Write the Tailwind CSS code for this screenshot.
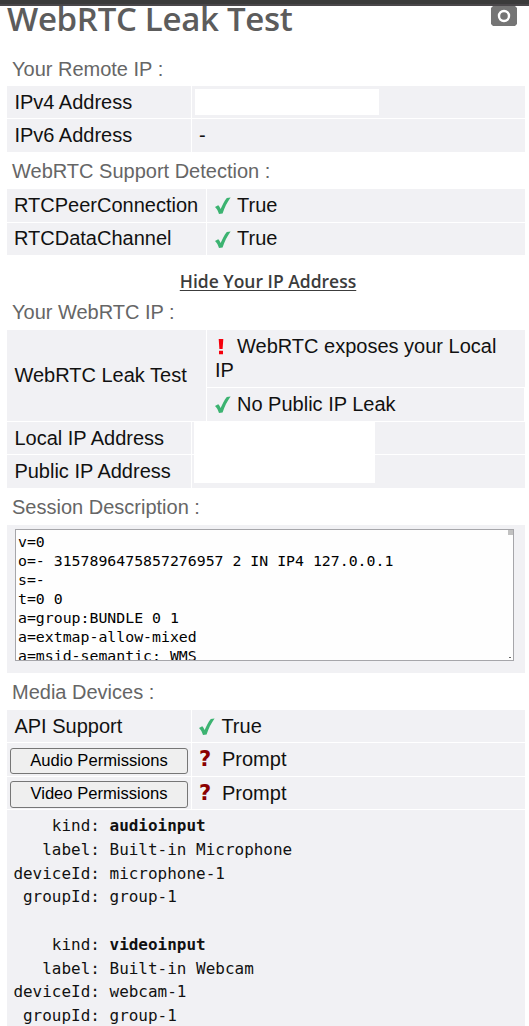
<!DOCTYPE html>
<html lang="en">
<head>
<meta charset="utf-8">
<title>WebRTC Leak Test</title>
<script src="https://cdn.jsdelivr.net/npm/@tailwindcss/browser@4"></script>
</head>
<body class="bg-white">
<svg class="hidden"><symbol id="check" viewBox="0 0 16 18"><path d="M0 10 L3.2 8.3 C4.4 9.3 5 10.6 5.6 11.9 C7.5 7.8 9.4 3.8 11.8 .9 L15.6 .6 C12.2 5.4 9.4 10.8 7.6 16.4 L4 16.9 C3.1 14.2 1.9 11.8 0 10Z" fill="#3cb371"/></symbol></svg>
<div class="w-[529px] h-[1026px] overflow-hidden flex flex-col font-['Liberation_Sans',sans-serif] text-[20px] leading-6 text-[#111] whitespace-nowrap">
  <div class="h-[6px] shrink-0 bg-[#3b3b3b] border-b-2 border-[#4a474a]"></div>
  <header class="h-[45px] shrink-0 pl-[7px] pr-3 flex justify-between">
    <h1 class="font-['Open_Sans',sans-serif] font-semibold text-[33px] tracking-[-0.3px] leading-[46px] -mt-[10px] text-[#5c5c5c]">WebRTC Leak Test</h1>
    <svg width="26" height="20" viewBox="0 0 26 20"><path d="M2 0H24L26 2V18L24 20H2L0 18V2Z" fill="#757575"/><circle cx="13" cy="10" r="5" fill="none" stroke="#fff" stroke-width="2.4"/></svg>
  </header>

  <h2 class="h-[35px] shrink-0 pl-3 pt-[6px] text-[#666]">Your Remote IP :</h2>
  <section class="shrink-0 ml-[7px] w-[518px] grid grid-cols-[184px_333px] grid-rows-[32px_33px] gap-px">
    <div class="bg-[#f1f1f4] pl-[7.4px] pt-[4px]">IPv4 Address</div>
    <div class="bg-[#f1f1f4] pl-[3px] pt-[3px]"><div class="bg-white w-[184px] h-[26px]"></div></div>
    <div class="bg-[#f1f1f4] pl-[7.4px] pt-[4px]">IPv6 Address</div>
    <div class="bg-[#f1f1f4] pl-[7px] pt-[4px]">-</div>
  </section>

  <h2 class="h-[37px] shrink-0 pl-3 pt-[7px] text-[#666]">WebRTC Support Detection :</h2>
  <section class="shrink-0 ml-[7px] w-[518px] grid grid-cols-[199px_318px] grid-rows-[33px_32px] gap-px">
    <div class="bg-[#f1f1f4] pl-[7px] pt-[4px]">RTCPeerConnection</div>
    <div class="bg-[#f1f1f4] pl-[8px] pt-[4px] flex gap-[6px]"><svg class="w-4 h-[18px] mt-[4px]"><use href="#check"/></svg>True</div>
    <div class="bg-[#f1f1f4] pl-[7px] pt-[3px]">RTCDataChannel</div>
    <div class="bg-[#f1f1f4] pl-[8px] pt-[3px] flex gap-[6px]"><svg class="w-4 h-[18px] mt-[5px]"><use href="#check"/></svg>True</div>
  </section>

  <a class="h-[43px] shrink-0 pt-[14px] pl-[7px] text-center font-['Open_Sans',sans-serif] font-semibold text-[17.5px] text-[#3c3c3c] underline underline-offset-[2px] decoration-1">Hide Your IP Address</a>

  <h2 class="h-[32px] shrink-0 pl-3 pt-[2px] text-[#666]">Your WebRTC IP :</h2>
  <section class="shrink-0 ml-[7px] w-[518px] grid grid-cols-[199px_318px] grid-rows-[57px_33px] gap-px">
    <div class="bg-[#f1f1f4] row-span-2 pl-[7.4px] pb-[2px] flex items-center">WebRTC Leak Test</div>
    <div class="bg-[#f1f1f4] pl-[8px] pt-[4px]">
      <div class="flex gap-[6px]"><svg class="mt-[5px]" width="16" height="16" viewBox="0 0 16 16"><path d="M3.7 0H8.3L7.6 10H4.4ZM4 11.8H8V15.2H4Z" fill="#f5000c"/></svg>WebRTC exposes your Local</div>
      <div>IP</div>
    </div>
    <div class="bg-[#f1f1f4] pl-[8px] pt-[4px] mr-px flex gap-[6px]"><svg class="w-4 h-[18px] mt-[4px]"><use href="#check"/></svg>No Public IP Leak</div>
  </section>
  <section class="relative shrink-0 mt-px ml-[7px] w-[518px] grid grid-cols-[184px_333px] grid-rows-[32px_33px] gap-px">
    <div class="bg-[#f1f1f4] pl-[7.4px] pt-[4px]">Local IP Address</div>
    <div class="bg-[#f1f1f4]"></div>
    <div class="bg-[#f1f1f4] pl-[7.4px] pt-[4px]">Public IP Address</div>
    <div class="bg-[#f1f1f4]"></div>
    <div class="absolute left-[187px] -top-[1px] w-[181px] h-[62px] bg-white"></div>
  </section>

  <h2 class="h-[37px] shrink-0 pl-3 pt-[7px] text-[#666]">Session Description :</h2>
  <section class="shrink-0 ml-[7px] w-[518px] h-[148px] bg-[#f1f1f4] pl-[8px] pt-[4px]">
    <div class="relative w-[499px] h-[132px] border border-[#a6a6aa] bg-[#fefefe] overflow-hidden">
      <pre class="pl-[2px] pt-[3px] font-['DejaVu_Sans_Mono',monospace] text-[14.85px] leading-[19px] text-black">v=0
o=- 3157896475857276957 2 IN IP4 127.0.0.1
s=-
t=0 0
a=group:BUNDLE 0 1
a=extmap-allow-mixed
a=msid-semantic: WMS</pre>
      <div class="absolute right-0 top-0 size-[5px] bg-[#c1c1c1]"></div>
      <div class="absolute right-[2px] bottom-[2px] w-[2px] h-px bg-[#666]"></div>
    </div>
  </section>

  <h2 class="h-[37px] shrink-0 pl-3 pt-[7px] text-[#666]">Media Devices :</h2>
  <section class="shrink-0 ml-[7px] w-[518px] grid grid-cols-[184px_333px] grid-rows-[32px_33px_32px] gap-px">
    <div class="bg-[#f1f1f4] pl-[7.4px] pt-[4px]">API Support</div>
    <div class="bg-[#f1f1f4] pl-[7.4px] pt-[4px] flex gap-[6px]"><svg class="w-4 h-[18px] mt-[4px]"><use href="#check"/></svg>True</div>
    <div class="bg-[#f1f1f4] pl-[3px] pt-[5px]"><button class="block w-[178px] h-[26px] border border-[#767676] rounded-[3px] bg-[#efefef] text-[16.6px] leading-[24px] text-black">Audio Permissions</button></div>
    <div class="bg-[#f1f1f4] pl-[7px] pt-[4px] flex"><span class="w-[23px] font-['DejaVu_Sans',sans-serif] font-bold text-[21px] text-[#8b0000]">?</span>Prompt</div>
    <div class="bg-[#f1f1f4] pl-[3px] pt-[4px]"><button class="block w-[178px] h-[27px] border border-[#767676] rounded-[3px] bg-[#efefef] text-[16.6px] leading-[23px] pb-[2px] text-black">Video Permissions</button></div>
    <div class="bg-[#f1f1f4] pl-[7px] pt-[4px] flex"><span class="w-[23px] font-['DejaVu_Sans',sans-serif] font-bold text-[21px] text-[#8b0000]">?</span>Prompt</div>
  </section>
  <pre class="mt-px ml-[7px] w-[518px] grow pl-[6.4px] pt-[4px] bg-[#f1f1f4] font-['DejaVu_Sans_Mono',monospace] text-[15.98px] leading-[23.75px]">    kind: <b class="leading-none">audioinput</b>
   label: Built-in Microphone
deviceId: microphone-1
 groupId: group-1

    kind: <b class="leading-none">videoinput</b>
   label: Built-in Webcam
deviceId: webcam-1
 groupId: group-1</pre>
</div>
</body>
</html>
